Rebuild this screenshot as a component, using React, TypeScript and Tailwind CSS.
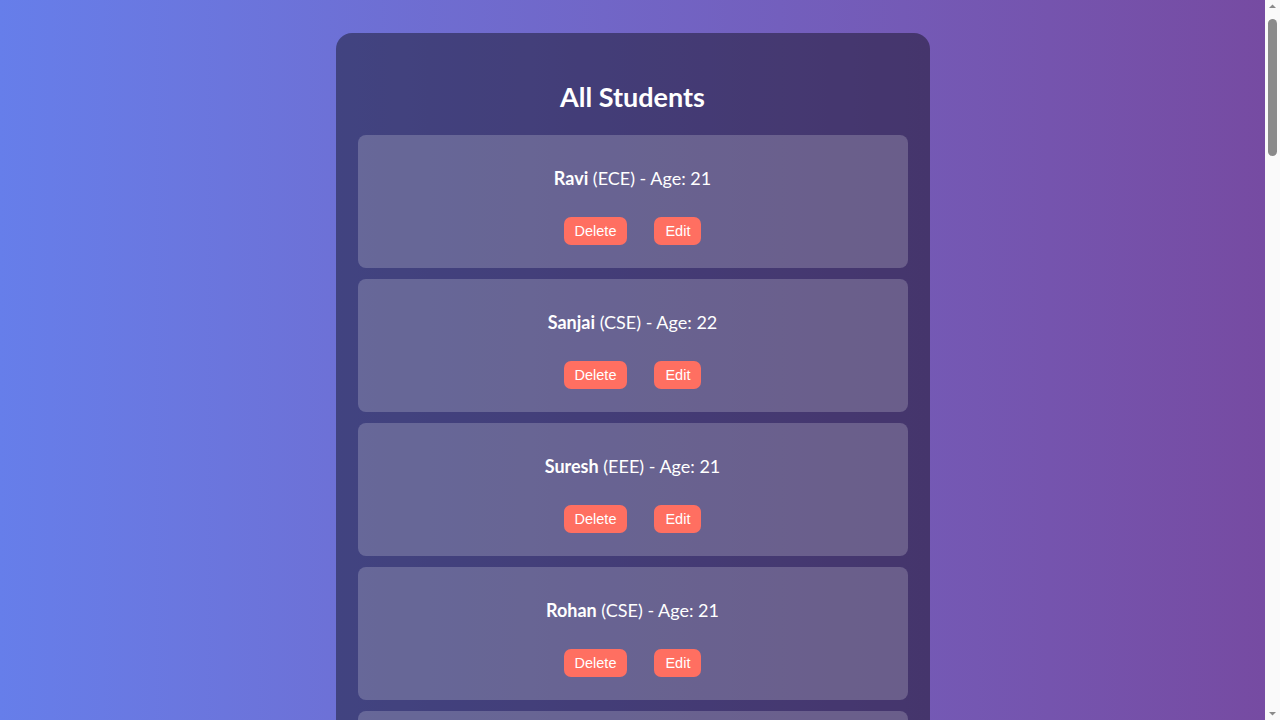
import React from 'react';

const STUDENTS = [
  { name: 'Ravi', dept: 'ECE', age: 21 },
  { name: 'Sanjai', dept: 'CSE', age: 22 },
  { name: 'Suresh', dept: 'EEE', age: 21 },
  { name: 'Rohan', dept: 'CSE', age: 21 },
  { name: 'Priya', dept: 'IT', age: 20 },
  { name: 'Karthik', dept: 'MECH', age: 22 },
  { name: 'Divya', dept: 'ECE', age: 21 },
  { name: 'Arun', dept: 'CIVIL', age: 23 },
  { name: 'Meena', dept: 'CSE', age: 20 },
  { name: 'Vignesh', dept: 'EEE', age: 22 },
  { name: 'Lakshmi', dept: 'IT', age: 21 },
  { name: 'Hari', dept: 'ECE', age: 22 },
  { name: 'Keerthi', dept: 'CSE', age: 21 },
  { name: 'Manoj', dept: 'MECH', age: 23 },
  { name: 'Swetha', dept: 'EEE', age: 20 },
  { name: 'Ajay', dept: 'CSE', age: 21 },
  { name: 'Nisha', dept: 'IT', age: 22 },
  { name: 'Gokul', dept: 'ECE', age: 21 },
  { name: 'Revathi', dept: 'CIVIL', age: 22 },
  { name: 'Dinesh', dept: 'CSE', age: 20 },
  { name: 'Kavya', dept: 'EEE', age: 21 },
  { name: 'Praveen', dept: 'MECH', age: 22 },
  { name: 'Anitha', dept: 'IT', age: 21 },
];

// browser scrollbar as it appears in the screenshot
const ScrollBar = () => (
  <aside className="flex w-[15px] shrink-0 flex-col items-center bg-[#fafafa]">
    <svg width="15" height="17" viewBox="0 0 15 17" className="shrink-0">
      <path d="M4 8 L7.5 4.5 L11 8 Z" fill="#8a8a8a" />
    </svg>
    <div className="mt-[2px] h-[137px] w-[9px] rounded-full bg-[#8a8a8a]" />
    <div className="flex-1" />
    <svg width="15" height="17" viewBox="0 0 15 17" className="shrink-0">
      <path d="M4 9 L7.5 12.5 L11 9 Z" fill="#8a8a8a" />
    </svg>
  </aside>
);

export default function App() {
  return (
    <div className="flex h-screen overflow-hidden">
      <main className="min-h-screen flex-1 self-start bg-gradient-to-r from-[#667eea] to-[#764ba2] py-[33px] font-['Lato','Noto_Sans',sans-serif] text-white">
        <div className="mx-auto w-[594px] rounded-[16px] bg-black/40 px-[22px] pt-[48px] pb-[22px]">
          <h2 className="text-center text-[27px] font-bold leading-[32px]">All Students</h2>

          <div className="mt-[22px] flex flex-col gap-[11px]">
            {STUDENTS.map(s => (
              <div
                key={s.name}
                className="flex flex-col items-center rounded-[8px] bg-white/20 pt-[31px] pb-[23px]"
              >
                <p className="text-[18px] leading-[24px]">
                  <span className="font-bold">{s.name}</span> ({s.dept}) - Age: {s.age}
                </p>
                <div className="mt-[27px] flex gap-[27px] font-['Liberation_Sans',Arial,sans-serif] text-[14.5px]">
                  <button className="h-[28px] rounded-[7px] bg-[#ff6f61] px-[11px] pt-[1px] text-white">Delete</button>
                  <button className="h-[28px] rounded-[7px] bg-[#ff6f61] px-[11px] pt-[1px] text-white">Edit</button>
                </div>
              </div>
            ))}
          </div>
        </div>
      </main>
      <ScrollBar />
    </div>
  );
}
